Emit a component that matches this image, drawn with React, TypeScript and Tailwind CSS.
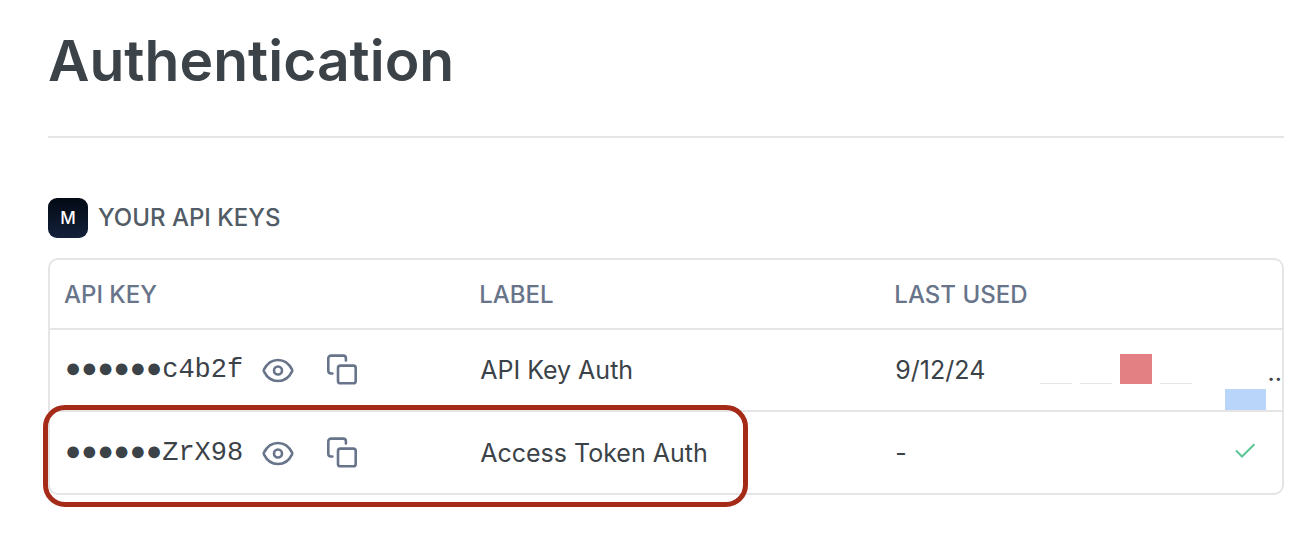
import React from "react";

type ApiKey = { suffix: string; label: string; lastUsed: string };

const apiKeys: ApiKey[] = [
  { suffix: "c4b2f", label: "API Key Auth", lastUsed: "9/12/24" },
  { suffix: "ZrX98", label: "Access Token Auth", lastUsed: "-" },
];

function EyeIcon() {
  return (
    <svg className="size-8" viewBox="0 0 32 32" fill="none" stroke="currentColor" strokeWidth="2.6" aria-hidden="true">
      <path
        strokeLinejoin="round"
        d="M1.9 17.3a2 2 0 0 1 0-1.6C4.8 9.9 9.9 6 16 6s11.200 3.900 14.100 9.700a2 2 0 0 1 0 1.600C27.200 23.100 22.100 27 16 27S4.800 23.100 1.900 17.300Z"
      />
      <circle cx="16" cy="16.500" r="4" />
    </svg>
  );
}

function CopyIcon() {
  return (
    <svg
      className="size-8"
      viewBox="0 0 32 32"
      fill="none"
      stroke="currentColor"
      strokeWidth="2.6"
      strokeLinecap="round"
      aria-hidden="true"
    >
      <rect x="12" y="11.600" width="17.700" height="17.700" rx="2.400" />
      <path d="M6.400 19.500H5a2.700 2.700 0 0 1-2.700-2.700V4.300A2.700 2.700 0 0 1 5 1.600h12.200A2.700 2.700 0 0 1 19.900 4.300v2.200" />
    </svg>
  );
}

function UsageChart() {
  return (
    <div className="flex items-end gap-2 pb-[2px]" aria-hidden="true">
      <div className="h-px w-8 bg-[#e5e5e5]" />
      <div className="h-px w-8 bg-[#e5e5e5]" />
      <div className="h-[30px] w-8 bg-[#e28083]" />
      <div className="h-px w-8 bg-[#e5e5e5]" />
    </div>
  );
}

function KeyCell({ suffix }: { suffix: string }) {
  return (
    <div className="flex items-center">
      <span className="w-[197px] whitespace-nowrap font-['Liberation_Mono',monospace] text-[27px] leading-8">
        ●●●●●●{suffix}
      </span>
      <div className="flex gap-8 text-[#677489]">
        <button type="button" aria-label="Show key" className="block">
          <EyeIcon />
        </button>
        <button type="button" aria-label="Copy key" className="block">
          <CopyIcon />
        </button>
      </div>
    </div>
  );
}

export default function App() {
  return (
    <main className="bg-white px-8 pt-6 pb-12 pl-12 font-['Inter',sans-serif] text-[#3b4248]">
      <h1 className="text-[57px] leading-[74px] font-semibold">Authentication</h1>
      <hr className="mt-[38px] border-t-2 border-[#e5e5e5]" />

      <section className="mt-15">
        <div className="flex items-center gap-[10px]">
          <div className="flex size-10 items-center justify-center rounded-[9px] bg-linear-to-b from-[#030a14] to-[#14213b] pt-px text-[17px] font-medium text-white">
            M
          </div>
          <h2 className="text-2xl font-medium text-[#525c66]">YOUR API KEYS</h2>
        </div>

        <div className="relative mt-5">
          <div className="overflow-hidden rounded-[10px] border-2 border-[#e5e5e5]">
            <table className="w-full table-fixed border-separate border-spacing-0 text-left">
              <colgroup>
                <col className="w-[33.7%]" />
                <col className="w-[33.7%]" />
                <col />
              </colgroup>
              <thead className="text-2xl text-[#677489]">
                <tr className="h-[70px]">
                  <th className="border-b-2 border-[#e5e5e5] px-[14px] pt-[2px] font-medium">API KEY</th>
                  <th className="border-b-2 border-[#e5e5e5] px-[14px] pt-[2px] font-medium">LABEL</th>
                  <th className="border-b-2 border-[#e5e5e5] px-[14px] pt-[2px] font-medium">LAST USED</th>
                </tr>
              </thead>
              <tbody className="text-[25px] leading-8">
                <tr className="h-[82px]">
                  <td className="border-b-2 border-[#e5e5e5] px-[15px]">
                    <KeyCell suffix={apiKeys[0].suffix} />
                  </td>
                  <td className="border-b-2 border-[#e5e5e5] px-[15px]">{apiKeys[0].label}</td>
                  <td className="relative border-b-2 border-[#e5e5e5] pl-[15px]">
                    <div className="flex items-center justify-between">
                      <span className="w-[145px]">{apiKeys[0].lastUsed}</span>
                      <UsageChart />
                      <span className="ml-auto pt-1">..</span>
                    </div>
                    <div className="absolute right-4 bottom-0 h-[21px] w-[41px] bg-[#bad5fa]" />
                  </td>
                </tr>
                <tr className="h-[81px]">
                  <td className="px-[15px]">
                    <KeyCell suffix={apiKeys[1].suffix} />
                  </td>
                  <td className="px-[15px]">{apiKeys[1].label}</td>
                  <td className="px-[15px]">
                    <div className="flex items-center justify-between pr-[10px]">
                      <span>{apiKeys[1].lastUsed}</span>
                      <svg
                        className="size-6"
                        viewBox="0 0 24 24"
                        fill="none"
                        stroke="#5bc596"
                        strokeWidth="2"
                        role="img"
                        aria-label="Active"
                      >
                        <path d="m3 9.500 6 6L21.400 3.200" />
                      </svg>
                    </div>
                  </td>
                </tr>
              </tbody>
            </table>
          </div>
          <div className="pointer-events-none absolute -bottom-3 -left-[5px] h-[102px] w-[57%] rounded-[22px] border-5 border-[#a52a17]" />
        </div>
      </section>
    </main>
  );
}
